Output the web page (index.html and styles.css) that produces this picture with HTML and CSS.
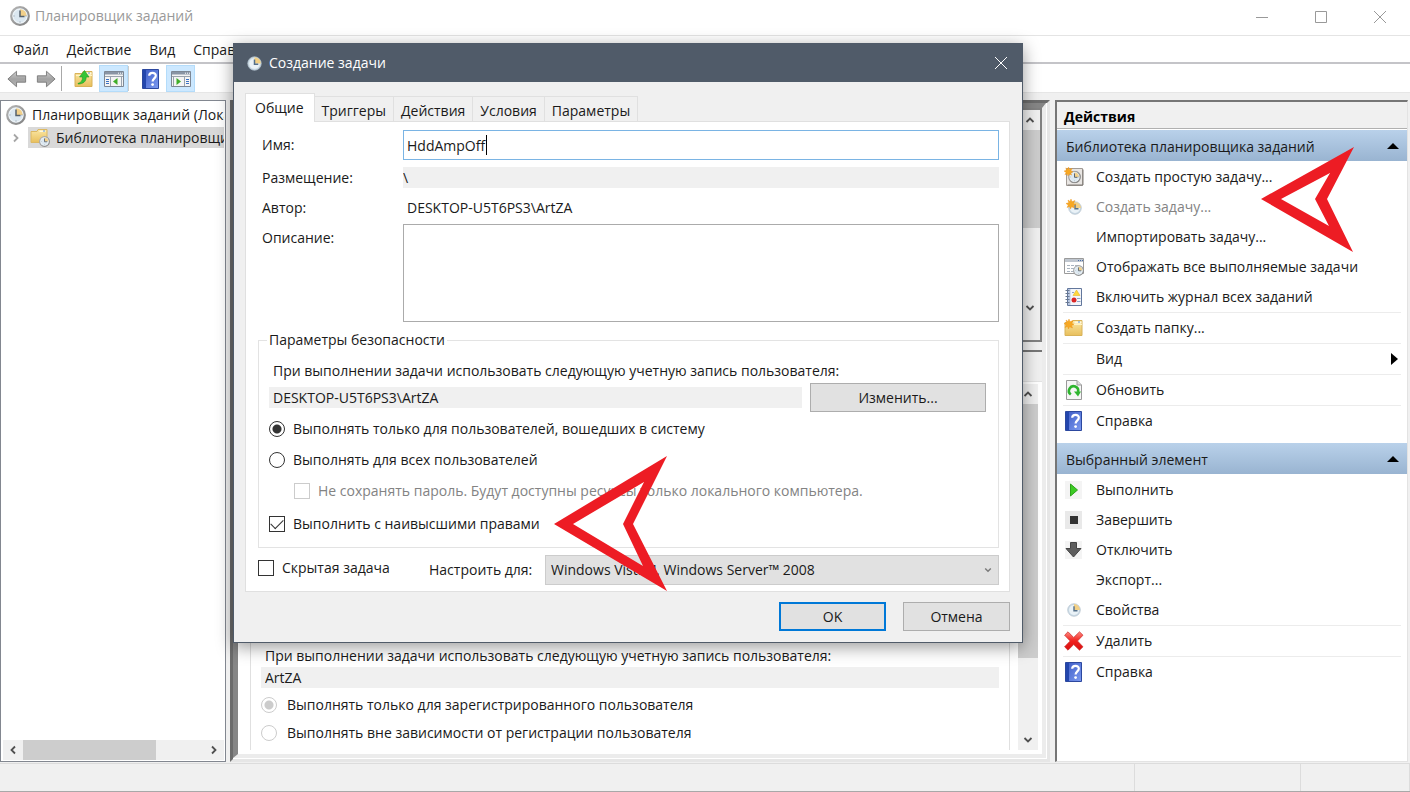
FILE: index.html
```html
<!DOCTYPE html>
<html lang="ru">

<head>
  <meta charset="UTF-8" />
  <meta name="viewport" content="width=device-width, initial-scale=1.0" />
  <title>Планировщик заданий</title>
  <link rel="stylesheet" href="styles.css">
</head>

<body>
  <!-- shared icons -->
  <svg class="sprite" aria-hidden="true">
    <defs>
      <linearGradient id="gFolder" x1="0" y1="0" x2="0" y2="1"><stop offset="0" stop-color="#fbe7a4" /><stop offset="1" stop-color="#e8bf5c" /></linearGradient>
      <linearGradient id="gHelp" x1="0" y1="0" x2="1" y2="1"><stop offset="0" stop-color="#3a59c4" /><stop offset="1" stop-color="#7d9bf0" /></linearGradient>
      <linearGradient id="gArrow" x1="0" y1="0" x2="0" y2="1"><stop offset="0" stop-color="#cfcfcf" /><stop offset="0.5" stop-color="#a2a2a2" /><stop offset="1" stop-color="#b4b4b4" /></linearGradient>
      <linearGradient id="gRed" x1="0" y1="0" x2="0" y2="1"><stop offset="0" stop-color="#ff8a80" /><stop offset="0.5" stop-color="#f0201c" /><stop offset="1" stop-color="#d80f0f" /></linearGradient>
      <linearGradient id="gRim" x1="0" y1="0" x2="1" y2="1"><stop offset="0" stop-color="#b5b5b5" /><stop offset="1" stop-color="#828282" /></linearGradient>
    </defs>
    <symbol id="clock" viewBox="0 0 20 20">
      <circle cx="10" cy="10" r="8.800" fill="#d4dfe8" stroke="url(#gRim)" stroke-width="2.200" />
      <circle cx="10" cy="10" r="7" fill="#dbe7f0" stroke="#f4f8fa" />
      <path d="M10 10V3.200A6.800 6.800 0 0 1 16.800 10z" fill="#f2d08a" />
      <path d="M10 4.500V10.500H14.500" fill="none" stroke="#56616c" stroke-width="1.500" />
      <path d="M10 15.500v1M3.500 10h1M15.500 10h1" stroke="#8a97a3" />
    </symbol>
    <symbol id="clock-soft" viewBox="0 0 20 20">
      <circle cx="10" cy="10" r="9" fill="#cbdbe6" stroke="#b3c2cd" />
      <circle cx="10" cy="10" r="7" fill="#eaf2f7" />
      <path d="M10 10V1.500A8.500 8.500 0 0 1 18.500 10z" fill="#f3d085" />
      <path d="M10 4.500V11H15" fill="none" stroke="#55708a" stroke-width="2" />
    </symbol>
    <symbol id="folder" viewBox="0 0 20 20">
      <path d="M1 4.500h7l1-2h9v15H1z" fill="url(#gFolder)" stroke="#d8b258" />
      <path d="M10.500 3.500h7v2h-7z" fill="#fff8df" />
      <path d="M14 3.500h2v1h-2z" fill="#5c94d6" />
      <path d="M2 6.500h16" stroke="#fff3c4" />
    </symbol>
    <symbol id="folder-up" viewBox="0 0 20 20">
      <use href="#folder" />
      <path d="M4 14.500c3-1 4.500-2.500 4.500-6.500H5.500L10.500 1.500 15 8h-2.800c0 4.500-3 7-8.200 7z" fill="#35c535" stroke="#1f9a24" stroke-width=".6" />
    </symbol>
    <symbol id="folder-clock" viewBox="0 0 20 20">
      <path d="M1 3.500h6l1-2h9v13H1z" fill="url(#gFolder)" stroke="#dcb862" />
      <path d="M9.500 2.500h6v1.500h-6z" fill="#fff8df" />
      <path d="M13 2.500h2v1h-2z" fill="#5c94d6" />
      <svg x="9" y="8" width="11" height="11"><use href="#clock" /></svg>
    </symbol>
    <symbol id="star" viewBox="0 0 10 10">
      <path d="M5 0l1 2.700L9 1.500 7.700 4.300 10 5.500 7.500 6.500 8.500 9 5.500 7.800 4.500 10 3.500 7.500 1 8.500 2.300 6 0 4.500 2.700 3.700 2 1l2 1.500z" fill="#f7a823" stroke="#ee8f12" stroke-width=".4" />
    </symbol>
    <symbol id="folder-new" viewBox="0 0 20 20">
      <use href="#folder" />
      <svg x="0" y="1" width="10" height="10"><use href="#star" /></svg>
    </symbol>
    <symbol id="task-basic" viewBox="0 0 20 20">
      <path d="M2.500 1.500h16v17h-16z" fill="#e9e6e3" stroke="#a19b96" />
      <path d="M3.500 18h15.500V2.500" fill="none" stroke="#7d7874" />
      <svg x="4" y="3.500" width="13" height="13"><use href="#clock" /></svg>
      <svg x="0" y="0" width="9" height="9"><use href="#star" /></svg>
    </symbol>
    <symbol id="task-new" viewBox="0 0 20 20">
      <svg x="4" y="4" width="14" height="14"><use href="#clock-soft" /></svg>
      <svg x="2" y="2" width="10" height="10"><use href="#star" /></svg>
    </symbol>
    <symbol id="running" viewBox="0 0 20 20">
      <path d="M.5 1.500h19v15H.5z" fill="#fff" stroke="#9a9a9a" />
      <path d="M1 2h18v3H1z" fill="#bfc6cf" />
      <path d="M14 3.500h1M16 3.500h1M18 3.500h1" stroke="#4a6da8" />
      <path d="M3 8.500h3M7 8.500h3M11 8.500h3M3 11.500h3M7 11.500h3M3 14.500h3M7 14.500h3" stroke="#a9b4c0" />
      <svg x="9" y="8" width="11" height="11"><use href="#clock" /></svg>
    </symbol>
    <symbol id="journal" viewBox="0 0 20 20">
      <path d="M3.500 1.500h14v17h-14z" fill="#f3f5fa" stroke="#62779c" />
      <path d="M4 2h2.500v16H4z" fill="#b9c8e2" />
      <path d="M1.500 3.500h4M1.500 6.500h4M1.500 9.500h4M1.500 12.500h4M1.500 15.500h4" stroke="#6a7890" />
      <path d="M12.500 3l3.500 5.500H9z" fill="#ffd83c" stroke="#e2ad10" stroke-width=".5" />
      <circle cx="10" cy="13" r="2.500" fill="#da2626" />
      <path d="M13 11.500h3.500M13 14.500h3.500M8 5.500h2" stroke="#8fa4c6" />
    </symbol>
    <symbol id="refresh" viewBox="0 0 20 20">
      <path d="M2.500.500h10.500l4.500 4.500V19.500h-15z" fill="#f6f6f6" stroke="#9a9a9a" />
      <path d="M13 .500v4.500h4.500" fill="#dcdcdc" stroke="#9a9a9a" />
      <path d="M6.800 14.500A4.600 4.600 0 1 1 14 12" fill="none" stroke="#2fb52f" stroke-width="2.600" />
      <path d="M10 11.500h7L14 16.500z" fill="#2fb52f" />
    </symbol>
    <symbol id="help" viewBox="0 0 18 20">
      <path d="M.5.500h16v19H.5z" fill="url(#gHelp)" stroke="#2c489f" />
      <path d="M1 1h3v18H1z" fill="#2346ad" />
      <path d="M7.200 6.800C7.200 3 14 3 13.800 6.800c0 2.400-3.200 2.800-3.200 5.700" fill="none" stroke="#fff" stroke-width="2.200" />
      <circle cx="10.600" cy="15.600" r="1.400" fill="#fff" />
    </symbol>
    <symbol id="back" viewBox="0 0 22 20">
      <path d="M1 10L10.500 1.500v5H20.500v7H10.500v5z" fill="url(#gArrow)" stroke="#787878" stroke-linejoin="round" />
    </symbol>
    <symbol id="pane-left" viewBox="0 0 20 18">
      <path d="M.5 1.500h19v15H.5z" fill="#f4f4f4" stroke="#7d8794" />
      <path d="M1 2h18v2.500H1z" fill="#8995a5" />
      <path d="M14 3.200h1M16 3.200h1M18 3.200h1" stroke="#fff" />
      <path d="M1 6.500h18M6.500 7v9M17.500 7v9" stroke="#9aa3ae" />
      <path d="M2 9.500h3M2 11.500h3M2 13.500h3" stroke="#3a72c4" />
      <path d="M13.500 8v7L9 11.500z" fill="#3fae29" />
    </symbol>
    <symbol id="pane-right" viewBox="0 0 20 18">
      <path d="M.5 1.500h19v15H.5z" fill="#f4f4f4" stroke="#7d8794" />
      <path d="M1 2h18v2.500H1z" fill="#8995a5" />
      <path d="M14 3.200h1M16 3.200h1M18 3.200h1" stroke="#fff" />
      <path d="M1 6.500h18M2.500 7v9M13.500 7v9" stroke="#9aa3ae" />
      <path d="M15 9.500h3M15 11.500h3M15 13.500h3" stroke="#3a72c4" />
      <path d="M5.500 8v7l4.500-3.500z" fill="#3fae29" />
    </symbol>
    <symbol id="run" viewBox="0 0 20 20">
      <path d="M1 1h17v18H1z" fill="#f4f4f4" />
      <path d="M6.500 4v12l7-6z" fill="#3ccb24" stroke="#2da31b" stroke-linejoin="round" />
    </symbol>
    <symbol id="stop" viewBox="0 0 20 20">
      <path d="M1 1h17v18H1z" fill="#e9e9e9" />
      <path d="M6 6h8v8H6z" fill="#333" />
    </symbol>
    <symbol id="disable" viewBox="0 0 20 20">
      <path d="M1 1h17v18H1z" fill="#f4f4f4" />
      <path d="M6.500 2.500h6v6h4.500L9.500 17 2 8.500h4.500z" fill="#5e5e5e" stroke="#444" stroke-linejoin="round" />
    </symbol>
    <symbol id="props" viewBox="0 0 20 20">
      <svg x="3" y="3" width="14" height="14"><use href="#clock-soft" /></svg>
    </symbol>
    <symbol id="delete" viewBox="0 0 20 20">
      <path d="M4 .800L9.700 6.500 15.500.800 19 4.200 13.500 10 19 15.800 15.500 19.200 9.700 13.500 4 19.200.600 15.800 6.200 10 .600 4.200z" fill="url(#gRed)" stroke="#c92b2b" stroke-width=".7" stroke-linejoin="round" />
    </symbol>
    <symbol id="chevron" viewBox="0 0 10 10"><path d="M1.500 7L5 3.500 8.500 7" fill="none" stroke="#505050" stroke-width="1.800" /></symbol>
  </svg>

  <header class="titlebar">
    <svg class="icon"><use href="#clock" /></svg>
    <h1>Планировщик заданий</h1>
    <div class="window-buttons">
      <button aria-label="Свернуть"><svg viewBox="0 0 12 12"><path d="M0 6.500h12" /></svg></button>
      <button aria-label="Развернуть"><svg viewBox="0 0 12 12"><path d="M.5.500h11v11H.5z" /></svg></button>
      <button aria-label="Закрыть"><svg viewBox="0 0 12 12"><path d="M0 0l12 12M12 0L0 12" /></svg></button>
    </div>
  </header>

  <nav class="menubar">
    <button>Файл</button>
    <button>Действие</button>
    <button>Вид</button>
    <button>Справка</button>
  </nav>

  <div class="toolbar">
    <button class="tool" aria-label="Назад"><svg class="icon"><use href="#back" /></svg></button>
    <button class="tool" aria-label="Вперед"><svg class="icon flip"><use href="#back" /></svg></button>
    <span class="divider"></span>
    <button class="tool up" aria-label="Вверх"><svg class="icon"><use href="#folder-up" /></svg></button>
    <button class="tool on" aria-label="Дерево консоли"><svg class="icon"><use href="#pane-left" /></svg></button>
    <span class="divider light"></span>
    <button class="tool help" aria-label="Справка"><svg class="icon"><use href="#help" /></svg></button>
    <button class="tool on" aria-label="Панель действий"><svg class="icon"><use href="#pane-right" /></svg></button>
  </div>

  <main class="workspace">
    <aside class="tree">
      <ul>
        <li><svg class="icon root"><use href="#clock" /></svg><span>Планировщик заданий (Локальный)</span></li>
        <li class="child">
          <svg class="expander"><use href="#chevron" /></svg>
          <div class="selected"><svg class="icon"><use href="#folder-clock" /></svg><span>Библиотека планировщика заданий</span></div>
        </li>
      </ul>
      <div class="scroll-h">
        <button aria-label="Влево"><svg class="left"><use href="#chevron" /></svg></button>
        <div class="thumb"></div>
        <button aria-label="Вправо"><svg class="right"><use href="#chevron" /></svg></button>
      </div>
    </aside>

    <section class="center">
      <div class="bevel">
        <div class="task-list">
          <div class="scroll-v">
            <button aria-label="Вверх"><svg><use href="#chevron" /></svg></button>
            <div class="thumb"></div>
            <button aria-label="Вниз"><svg class="down"><use href="#chevron" /></svg></button>
          </div>
        </div>
        <div class="details">
          <div class="details-page">
            <div class="details-group">
              <p>При выполнении задачи использовать следующую учетную запись пользователя:</p>
              <input class="readonly" type="text" value="ArtZA" readonly aria-label="Учетная запись">
              <label class="option"><input type="radio" name="logged" checked disabled>Выполнять только для зарегистрированного пользователя</label>
              <label class="option"><input type="radio" name="logged" disabled>Выполнять вне зависимости от регистрации пользователя</label>
            </div>
            <div class="scroll-v">
              <button aria-label="Вверх"><svg><use href="#chevron" /></svg></button>
              <div class="thumb"></div>
              <button aria-label="Вниз"><svg class="down"><use href="#chevron" /></svg></button>
            </div>
          </div>
        </div>
      </div>
    </section>

    <aside class="actions">
      <h2>Действия</h2>
      <h3>Библиотека планировщика заданий<span class="collapse"></span></h3>
      <ul>
        <li><button><svg class="icon"><use href="#task-basic" /></svg>Создать простую задачу...</button></li>
        <li><button class="muted"><svg class="icon"><use href="#task-new" /></svg>Создать задачу...</button></li>
        <li><button><span class="icon"></span>Импортировать задачу...</button></li>
        <li><button><svg class="icon"><use href="#running" /></svg>Отображать все выполняемые задачи</button></li>
        <li><button><svg class="icon"><use href="#journal" /></svg>Включить журнал всех заданий</button></li>
        <li class="line"><button><svg class="icon"><use href="#folder-new" /></svg>Создать папку...</button></li>
        <li class="line"><button><span class="icon"></span>Вид<span class="submenu"></span></button></li>
        <li class="line"><button><svg class="icon"><use href="#refresh" /></svg>Обновить</button></li>
        <li class="line"><button><svg class="icon"><use href="#help" /></svg>Справка</button></li>
      </ul>
      <h3>Выбранный элемент<span class="collapse"></span></h3>
      <ul>
        <li><button><svg class="icon"><use href="#run" /></svg>Выполнить</button></li>
        <li><button><svg class="icon"><use href="#stop" /></svg>Завершить</button></li>
        <li><button><svg class="icon"><use href="#disable" /></svg>Отключить</button></li>
        <li><button><span class="icon"></span>Экспорт...</button></li>
        <li><button><svg class="icon"><use href="#props" /></svg>Свойства</button></li>
        <li class="line"><button><svg class="icon"><use href="#delete" /></svg>Удалить</button></li>
        <li class="line"><button><svg class="icon"><use href="#help" /></svg>Справка</button></li>
      </ul>
      <svg class="pointer pointer-create" viewBox="0 0 93 105" aria-hidden="true">
        <path d="M0 52L93 0 66 52 92 105zM20 52L68 79 54 52 69 26z" />
      </svg>
    </aside>
  </main>

  <footer class="statusbar"><span></span><span></span><span></span></footer>

  <div class="dialog" role="dialog" aria-labelledby="dialogTitle">
    <header class="dialog-title">
      <svg class="icon"><use href="#clock-soft" /></svg>
      <h2 id="dialogTitle">Создание задачи</h2>
      <button aria-label="Закрыть"><svg viewBox="0 0 12 12"><path d="M0 0l12 12M12 0L0 12" /></svg></button>
    </header>
    <form class="dialog-body">
      <div class="tabs" role="tablist">
        <button type="button" role="tab" class="active" aria-selected="true">Общие</button>
        <button type="button" role="tab">Триггеры</button>
        <button type="button" role="tab">Действия</button>
        <button type="button" role="tab">Условия</button>
        <button type="button" role="tab">Параметры</button>
      </div>
      <div class="page">
        <div class="fields">
          <label for="name">Имя:</label>
          <input id="name" class="name" type="text" value="HddAmpOff">
          <label for="location">Размещение:</label>
          <input id="location" class="readonly" type="text" value="\" readonly>
          <span class="caption">Автор:</span>
          <span class="author">DESKTOP-U5T6PS3\ArtZA</span>
          <label class="top" for="description">Описание:</label>
          <textarea id="description"></textarea>
        </div>
        <fieldset>
          <legend>Параметры безопасности</legend>
          <p>При выполнении задачи использовать следующую учетную запись пользователя:</p>
          <div class="account">
            <input class="readonly" type="text" value="DESKTOP-U5T6PS3\ArtZA" readonly aria-label="Учетная запись пользователя">
            <button type="button" class="btn">Изменить...</button>
          </div>
          <label class="option"><input type="radio" name="run" checked>Выполнять только для пользователей, вошедших в систему</label>
          <label class="option"><input type="radio" name="run">Выполнять для всех пользователей</label>
          <label class="option nested"><input type="checkbox" disabled>Не сохранять пароль. Будут доступны ресурсы только локального компьютера.</label>
          <label class="option"><input type="checkbox" checked>Выполнить с наивысшими правами</label>
        </fieldset>
        <div class="configure">
          <label class="option"><input type="checkbox">Скрытая задача</label>
          <label for="target">Настроить для:</label>
          <div class="select">
            <select id="target"><option>Windows Vista™, Windows Server™ 2008</option></select>
            <svg aria-hidden="true"><use href="#chevron" /></svg>
          </div>
        </div>
      </div>
      <div class="buttons">
        <button type="button" class="btn default">OK</button>
        <button type="button" class="btn">Отмена</button>
      </div>
    </form>
    <svg class="pointer pointer-rights" viewBox="0 0 113 135" aria-hidden="true">
      <path d="M0 68L113 0 79 68 113 135zM19 68L89 110 69 68 90 26z" />
    </svg>
  </div>
</body>

</html>
```
FILE: styles.css
```css
* {
  box-sizing: border-box;
}

body {
  margin: 0;
  height: 100vh;
  display: flex;
  flex-direction: column;
  overflow: hidden;
  position: relative;
  background: #f0f0f0;
  color: #1a1a1a;
  font-family: 'Open Sans', 'Noto Sans', sans-serif;
  font-size: 14px;
  line-height: 20px;
}

button,
input,
select,
textarea {
  font: inherit;
  color: inherit;
}

button {
  padding: 0;
  border: 0;
  background: none;
}

h1, h2, h3, p, ul {
  margin: 0;
  padding: 0;
  font-size: inherit;
  font-weight: normal;
  list-style: none;
}

.sprite {
  position: absolute;
  width: 0;
  height: 0;
}

.icon {
  flex: none;
  width: 20px;
  height: 20px;
}

/* main window */
.titlebar {
  flex: none;
  height: 36px;
  display: flex;
  align-items: center;
  padding: 0 1px 4px 10px;
  background: #fff;
  border-bottom: 1px solid #e4e4e4;
  color: #999;
}

.titlebar h1 {
  flex: 1;
  margin-left: 5px;
}

.window-buttons {
  display: flex;
}

.window-buttons button {
  width: 59px;
  height: 30px;
}

.window-buttons svg {
  width: 12px;
  height: 12px;
  fill: none;
  stroke: #999;
  vertical-align: middle;
}

.menubar {
  flex: none;
  height: 28px;
  display: flex;
  align-items: center;
  gap: 18px;
  padding: 2px 0 0 13px;
  background: #fff;
  border-bottom: 2px solid #c4c4c8;
}

.toolbar {
  flex: none;
  height: 29px;
  display: flex;
  align-items: center;
  padding: 1px 0 0 2px;
  background: #fff;
  border-bottom: 1px solid #e6e6e6;
}

.tool {
  width: 29px;
  height: 27px;
  display: flex;
  align-items: center;
  justify-content: center;
}

.tool.on {
  background: #cce8ff;
  border: 1px solid #b4dcfa;
}

.tool.up,
.tool.help {
  margin: 0 1px 0 7px;
}

.flip {
  transform: scaleX(-1);
}

.divider {
  width: 1px;
  height: 25px;
  margin-left: 1px;
  background: #a8a8a8;
}

.divider.light {
  margin-left: 0;
  background: #ccc;
}

.workspace {
  flex: 1;
  min-height: 0;
  display: flex;
  padding: 7px 2px 1px 0;
}

.tree {
  flex: none;
  width: 226px;
  display: flex;
  flex-direction: column;
  justify-content: space-between;
  padding: 3px 1px 1px 2px;
  background: #fff;
  border: 1px solid #828790;
  overflow: hidden;
}

.tree li {
  display: flex;
  align-items: center;
  height: 22px;
  gap: 6px;
  padding-left: 3px;
  white-space: nowrap;
  overflow: hidden;
}

.tree .child {
  height: 23px;
  padding-left: 8px;
}

.expander {
  flex: none;
  width: 10px;
  height: 10px;
  transform: rotate(90deg);
  opacity: 0.5;
}

.selected {
  flex: 1;
  min-width: 0;
  display: flex;
  align-items: center;
  gap: 6px;
  margin-left: 1px;
  padding-left: 2px;
  height: 21px;
  background: #d9d9d9;
  overflow: hidden;
}

.scroll-h {
  height: 20px;
  display: flex;
  background: #f0f0f0;
}

.scroll-h button,
.scroll-v button {
  flex: none;
  width: 20px;
  height: 20px;
  display: flex;
  align-items: center;
  justify-content: center;
}

.scroll-h svg,
.scroll-v svg {
  width: 10px;
  height: 10px;
}

.scroll-h .left {
  transform: rotate(-90deg);
}

.scroll-h .right {
  transform: rotate(90deg);
}

.scroll-v .down {
  transform: rotate(180deg);
}

.scroll-h .thumb {
  width: 60%;
  margin-right: auto;
  background: #cdcdcd;
}

.scroll-v {
  flex: none;
  width: 20px;
  display: flex;
  flex-direction: column;
  background: #f0f0f0;
}

.scroll-v .thumb {
  background: #cdcdcd;
}

/* nested frames around the middle pane */
.center {
  flex: 1;
  min-width: 0;
  margin: 0 5px 0 4px;
  padding: 0 1px 1px 0;
  border: 3px solid;
  border-color: #6c6c6c #e6e6e6 #e6e6e6 #6c6c6c;
  background: #fff;
  display: flex;
}

.bevel {
  flex: 1;
  min-width: 0;
  display: flex;
  flex-direction: column;
  border: solid;
  border-width: 5px 4px 4px 5px;
  border-color: #868686 #ececec #ececec #868686;
}

.task-list {
  flex: 0 0 234px;
  display: flex;
  justify-content: flex-end;
  background: #fff;
  border: 2px solid #828282;
  border-left: 0;
}

.task-list .thumb {
  height: 98px;
  margin-bottom: 70px;
}

.details {
  flex: 1;
  min-height: 0;
  display: flex;
  margin-top: 8px;
  padding-top: 29px;
  border-top: 2px solid #767676;
  background: #f0f0f0;
  box-shadow: 0 -8px #f0f0f0;
}

.details-page {
  flex: 1;
  display: flex;
  padding: 2px 4px 4px 12px;
  background: #fff;
  border-top: 1px solid #e3e3e3;
}

.details-group {
  flex: 1;
  display: flex;
  flex-direction: column;
  justify-content: flex-end;
  margin-right: 8px;
  padding: 0 10px 3px;
  border: 1px solid #e0e0e0;
  border-width: 0 1px;
}

.details-group p {
  padding: 0 4px;
  margin-bottom: 1px;
}

.details-group .readonly {
  margin-bottom: 3px;
}

.details-group .option {
  height: 28px;
  gap: 10px;
}

.details-page .thumb {
  flex: 1;
  margin-bottom: 72px;
}

.actions {
  flex: none;
  width: 353px;
  position: relative;
  background: #fff;
  border: 1px solid #e3e3e3;
  border-top: 2px solid #767676;
  border-left: 2px solid #767676;
}

.actions h2 {
  height: 27px;
  padding: 5px 7px;
  background: #f0f0f0;
  border-bottom: 1px solid #b0b0b0;
  color: #000;
  font-weight: bold;
}

.actions h3 {
  height: 31px;
  margin: 1px 0;
  display: flex;
  align-items: center;
  justify-content: space-between;
  padding: 2px 8px 0 9px;
  background: linear-gradient(#b9d1ea, #99b4d1);
}

.actions ul + h3 {
  margin-top: 7px;
}

.collapse {
  margin-bottom: 2px;
  border: 6px solid transparent;
  border-top: 0;
  border-bottom: 6px solid #000;
}

.actions ul {
  padding: 0 6px;
}

.actions .line {
  border-top: 1px solid #ececec;
}

.actions li button {
  width: 100%;
  height: 30px;
  display: flex;
  align-items: center;
  gap: 12px;
  padding-left: 1px;
  text-align: left;
}

.actions .muted {
  color: #838383;
}

.submenu {
  margin-left: auto;
  margin-right: 3px;
  border: 6px solid transparent;
  border-right: 0;
  border-left: 7px solid #000;
}

.statusbar {
  flex: none;
  height: 29px;
  display: flex;
  border-top: 1px solid #dcdcdc;
  border-bottom: 1px solid #a8a8a8;
}

.statusbar span {
  flex: 1;
  border-right: 1px solid #dcdcdc;
}

.statusbar span:nth-child(2) {
  flex: 0 0 166px;
}

.statusbar span:nth-child(3) {
  flex: 0 0 109px;
}

/* dialog */
.dialog {
  position: absolute;
  top: 43px;
  left: 233px;
  right: 387px;
  background: #f0f0f0;
  border: 1px solid #505b69;
  box-shadow: 0 4px 16px rgba(0, 0, 0, 0.4);
}

.dialog-title {
  height: 38px;
  display: flex;
  align-items: center;
  gap: 7px;
  padding: 0 15px 0 13px;
  background: #505b69;
  color: #fff;
}

.dialog-title .icon {
  width: 15px;
  height: 15px;
}

.dialog-title h2 {
  flex: 1;
}

.dialog-title button {
  display: flex;
}

.dialog-title button svg {
  width: 12px;
  height: 12px;
  fill: none;
  stroke: #fff;
}

.dialog-body {
  padding: 11px 12px 11px 11px;
}

.tabs {
  display: flex;
  align-items: flex-end;
}

.tabs button {
  height: 25px;
  padding: 4px 7px 0;
  border: 1px solid #e0e0e0;
  border-width: 1px 1px 0 0;
}

.tabs .active {
  height: 29px;
  margin-bottom: -1px;
  padding: 0 10px 0 9px;
  border-left-width: 1px;
  background: #fff;
  position: relative;
}

.page {
  padding: 8px 10px 6px 12px;
  background: #fff;
  border: 1px solid #e0e0e0;
}

.fields {
  display: grid;
  grid-template-columns: 145px 1fr;
  grid-template-rows: 30px 21px 22px 98px;
  row-gap: 7px;
  align-items: center;
}

.fields label,
.caption {
  padding-left: 4px;
}

.caption,
.author {
  padding-top: 3px;
}

.fields .top {
  align-self: start;
  padding-top: 4px;
}

.readonly {
  width: 100%;
  min-width: 0;
  height: 21px;
  padding: 0 4px;
  border: 0;
  background: #f0f0f0;
}

.fields .readonly {
  padding: 0;
}

/* the gradient layer is the text caret */
.name {
  height: 30px;
  padding: 0 3px;
  border: 1px solid #7ab4e4;
  background: linear-gradient(#000, #000) 82px center / 1px 20px no-repeat #fff;
}

.author {
  padding-left: 4px;
}

.fields textarea {
  height: 98px;
  padding: 4px;
  border: 1px solid #ababab;
  resize: none;
}

fieldset {
  min-width: 0;
  margin: 8px 0 7px;
  padding: 11px 12px 8px 10px;
  border: 1px solid #e3e3e3;
}

legend {
  margin-left: -2px;
  padding: 0 2px;
}

fieldset p {
  padding-left: 4px;
}

.account {
  display: flex;
  align-items: center;
  gap: 8px;
  margin: 2px 0 1px;
}

.account .btn {
  flex: 0 0 176px;
}

.btn {
  width: 107px;
  height: 29px;
  background: #e1e1e1;
  border: 1px solid #adadad;
}

.btn.default {
  border: 2px solid #0078d7;
}

.option {
  display: flex;
  align-items: center;
  gap: 8px;
  height: 31px;
}

.option input {
  appearance: none;
  flex: none;
  width: 16px;
  height: 16px;
  margin: 0;
  border: 1px solid #333;
  background: #fff;
}

.option input[type="radio"] {
  border-radius: 50%;
}

.option input[type="radio"]:checked {
  background: radial-gradient(circle, #333 4px, #fff 5px);
}

.option input[type="checkbox"]:checked {
  display: grid;
  place-items: center;
}

.option input[type="checkbox"]:checked::before {
  content: '';
  width: 11px;
  height: 6px;
  margin-bottom: 3px;
  border: solid #333;
  border-width: 0 0 1px 1px;
  transform: rotate(-45deg);
}

.option input:disabled {
  border-color: #ccc;
}

.option input[type="radio"]:checked:disabled {
  background: radial-gradient(circle, #ccc 4px, #fff 5px);
}

.nested {
  margin: 0 0 2px 25px;
  color: #838383;
}

.configure {
  display: grid;
  grid-template-columns: 171px 116px 1fr;
  align-items: center;
}

.configure .option {
  align-self: start;
  height: 26px;
}

.select {
  position: relative;
}

.select select {
  appearance: none;
  display: block;
  width: 100%;
  height: 30px;
  padding: 0 5px;
  border: 1px solid #ccc;
  border-radius: 0;
  background: #e1e1e1;
}

.select svg {
  position: absolute;
  top: 11px;
  right: 7px;
  width: 8px;
  height: 8px;
  transform: rotate(180deg);
  opacity: 0.7;
  pointer-events: none;
}

.buttons {
  display: flex;
  justify-content: flex-end;
  gap: 17px;
  margin-top: 10px;
}

/* red pointers */
.pointer {
  position: absolute;
  fill: #ed1c24;
  fill-rule: evenodd;
  pointer-events: none;
}

.pointer-create {
  top: 45px;
  right: 53px;
  width: 93px;
  height: 105px;
}

.pointer-rights {
  top: 412px;
  left: 320px;
  width: 113px;
  height: 135px;
}
```
